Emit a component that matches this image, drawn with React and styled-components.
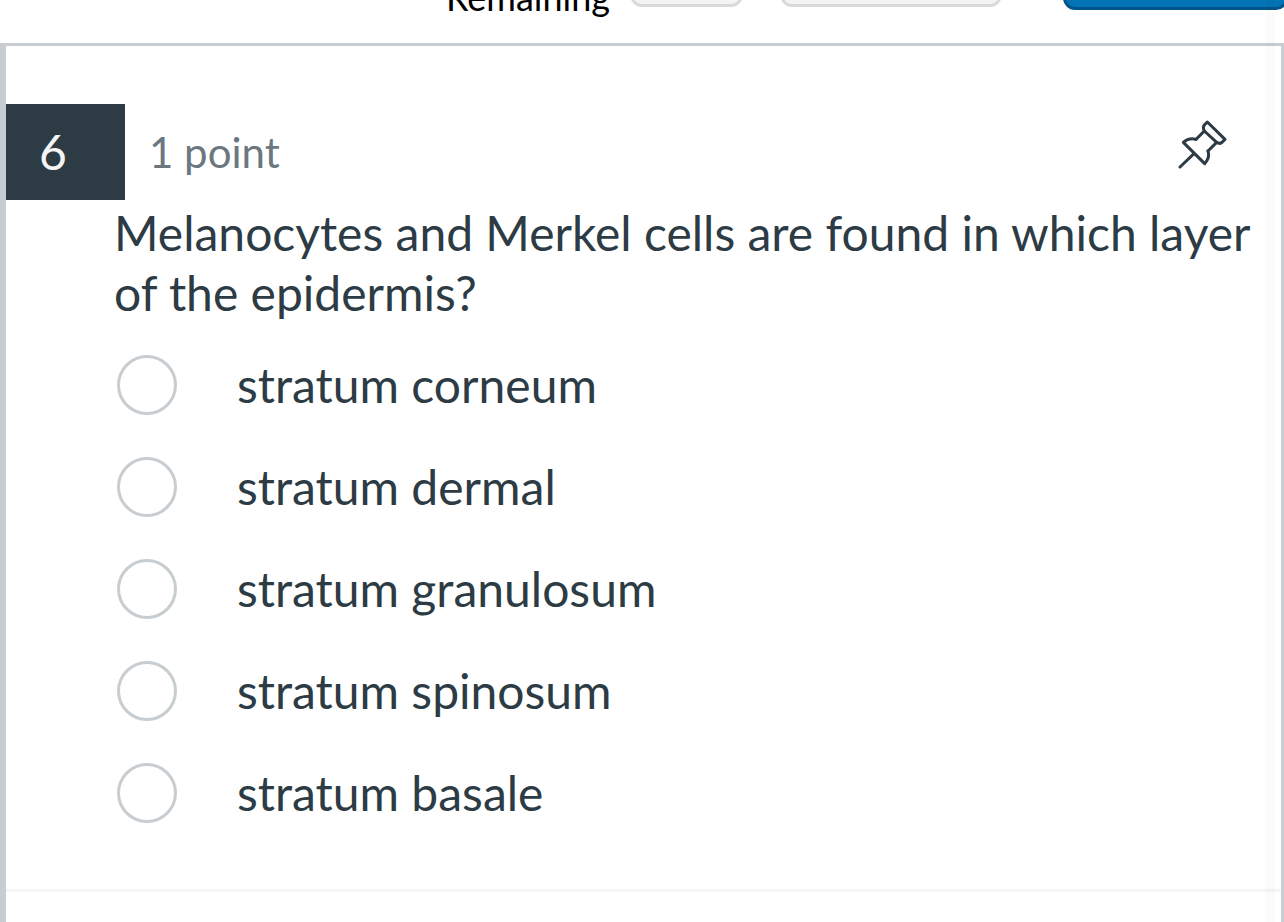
import React from "react";
import styled, { createGlobalStyle } from "styled-components";

const options = [
  "stratum corneum",
  "stratum dermal",
  "stratum granulosum",
  "stratum spinosum",
  "stratum basale",
];

const App = () => {
  return (
    <Page>
      <GlobalStyle />
      <Toolbar>
        <TimerLabel>Remaining</TimerLabel>
        <LightButton type="button" aria-label="Hide time" $width={113} />
        <LightButton type="button" aria-label="Return" $width={222} $space={37} />
        <SubmitButton type="button" aria-label="Submit" />
      </Toolbar>
      <Frame>
        <Question>
          <QuestionHeader>
            <Number>6</Number>
            <Points>1 point</Points>
            <PinButton type="button" aria-label="Pin question">
              <PinIcon />
            </PinButton>
          </QuestionHeader>
          <Answers>
            <Prompt>
              Melanocytes and Merkel cells are found in which layer of the
              epidermis?
            </Prompt>
            <OptionList>
              {options.map((option) => (
                <Option key={option}>
                  <Radio type="radio" name="question-6" value={option} />
                  {option}
                </Option>
              ))}
            </OptionList>
          </Answers>
        </Question>
      </Frame>
      <ScrollTrack />
    </Page>
  );
};

const PinIcon = () => (
  <svg
    width="49"
    height="49"
    viewBox="54 45 147 147"
    fill="none"
    stroke="#2d3b45"
    strokeWidth="9"
    strokeLinecap="round"
    strokeLinejoin="round"
    aria-hidden="true"
  >
    <path d="M60 186 L102 146" />
    <path d="M108 103 C94 99 80 103 70 112 L134 176 C144 165 149 152 144 138" />
    <path d="M108 103 L133 78 L170 112 L144 138" />
    <path d="M133 78 C129 70 130 63 134 59 L142 51 L195 103 L187 111 C182 117 176 116 170 112" />
  </svg>
);

const GlobalStyle = createGlobalStyle`
  * {
    box-sizing: border-box;
  }

  body {
    margin: 0;
    background: white;
    color: #2d3b45;
    font-family: Lato, sans-serif;
    overflow: hidden;
  }
`;

const Page = styled.div`
  display: flex;
  flex-direction: column;
  min-height: 100vh;
`;

const Toolbar = styled.header`
  display: flex;
  align-items: flex-end;
  justify-content: flex-end;
  height: 43px;
  padding-bottom: 33px;
  overflow: hidden;
`;

const TimerLabel = styled.span`
  flex-shrink: 0;
  color: black;
  font-size: 36px;
  line-height: 26px;
`;

const LightButton = styled.button`
  flex-shrink: 0;
  width: ${({ $width }) => $width}px;
  height: 60px;
  margin: 0 0 3px ${({ $space = 20 }) => $space}px;
  border: 3px solid #dadada;
  border-radius: 12px;
  background: #f4f4f4;
`;

const SubmitButton = styled.button`
  flex-shrink: 0;
  width: 225px;
  height: 66px;
  margin: 0 -4px 0 61px;
  border: 3px solid #00558a;
  border-radius: 12px;
  background: #0374b5;
`;

const Frame = styled.main`
  flex: 1;
  border: solid #c7cdd1;
  border-width: 3px 3px 0 6px;
`;

const Question = styled.section`
  padding: 58px 0 66px;
  border-bottom: 3px solid #f5f5f5;
`;

const QuestionHeader = styled.div`
  display: flex;
  align-items: center;
`;

const Number = styled.div`
  width: 119px;
  height: 96px;
  padding-left: 33px;
  background: #2d3b45;
  color: #f5f5f5;
  font-size: 48px;
  line-height: 96px;
`;

const Points = styled.div`
  margin-left: 24px;
  color: #6b7780;
  font-size: 42px;
  line-height: 96px;
`;

const PinButton = styled.button`
  display: flex;
  align-self: flex-start;
  margin: 16px 54px 0 auto;
  padding: 0;
  border: none;
  background: none;
  cursor: pointer;
`;

const Answers = styled.fieldset`
  margin: 0;
  padding: 4px 20px 0 108px;
  border: none;
`;

const Prompt = styled.legend`
  padding: 3px 0 0;
  font-size: 48px;
  line-height: 60px;
`;

const OptionList = styled.div`
  display: flex;
  flex-direction: column;
  gap: 42px;
  padding-top: 28px;
`;

const Option = styled.label`
  display: flex;
  align-items: center;
  gap: 60px;
  font-size: 48px;
  line-height: 60px;
  cursor: pointer;
`;

const Radio = styled.input`
  appearance: none;
  flex-shrink: 0;
  width: 60px;
  height: 60px;
  margin: 0 0 0 3px;
  border: 3px solid #c7cdd1;
  border-radius: 50%;
  background: white;

  &:checked {
    border-width: 18px;
    border-color: #2d3b45;
  }
`;

// faint track that floats over the right edge
const ScrollTrack = styled.div`
  position: fixed;
  top: 0;
  right: 9px;
  bottom: 0;
  width: 9px;
  background: rgba(0, 0, 0, 0.015);
  pointer-events: none;
`;

export default App;
